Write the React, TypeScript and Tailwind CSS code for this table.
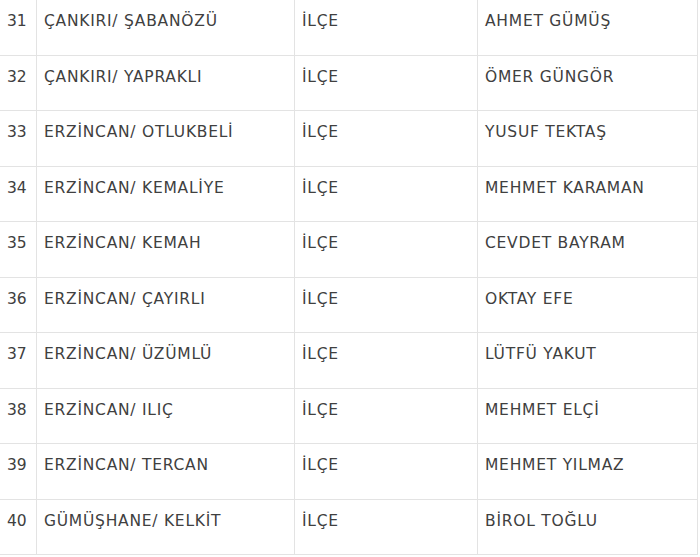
const ROWS = [
  { no: 31, place: 'ÇANKIRI/ ŞABANÖZÜ', type: 'İLÇE', name: 'AHMET GÜMÜŞ' },
  { no: 32, place: 'ÇANKIRI/ YAPRAKLI', type: 'İLÇE', name: 'ÖMER GÜNGÖR' },
  { no: 33, place: 'ERZİNCAN/ OTLUKBELİ', type: 'İLÇE', name: 'YUSUF TEKTAŞ' },
  { no: 34, place: 'ERZİNCAN/ KEMALİYE', type: 'İLÇE', name: 'MEHMET KARAMAN' },
  { no: 35, place: 'ERZİNCAN/ KEMAH', type: 'İLÇE', name: 'CEVDET BAYRAM' },
  { no: 36, place: 'ERZİNCAN/ ÇAYIRLI', type: 'İLÇE', name: 'OKTAY EFE' },
  { no: 37, place: 'ERZİNCAN/ ÜZÜMLÜ', type: 'İLÇE', name: 'LÜTFÜ YAKUT' },
  { no: 38, place: 'ERZİNCAN/ ILIÇ', type: 'İLÇE', name: 'MEHMET ELÇİ' },
  { no: 39, place: 'ERZİNCAN/ TERCAN', type: 'İLÇE', name: 'MEHMET YILMAZ' },
  { no: 40, place: 'GÜMÜŞHANE/ KELKİT', type: 'İLÇE', name: 'BİROL TOĞLU' },
];

const cell = 'border border-[#e3e3e3] pl-[7px] pr-2 pt-[9px] align-top';

export default function App() {
  return (
    <div className="h-[557px] w-[700px] overflow-hidden bg-white">
      <table
        className="-ml-px -mt-px table-fixed border-collapse text-[15.5px] leading-6 tracking-[0.75px] text-[#404040]"
        style={{ fontFamily: "'DejaVu Sans', sans-serif" }}
      >
        <colgroup>
          <col className="w-[37px]" />
          <col className="w-[258px]" />
          <col className="w-[183px]" />
          <col className="w-[220px]" />
        </colgroup>
        <tbody>
          {ROWS.map((r) => (
            <tr key={r.no} className="h-[55.5px]">
              <td className={`${cell} pr-0 tracking-normal`}>{r.no}</td>
              <td className={cell}>{r.place}</td>
              <td className={cell}>{r.type}</td>
              <td className={cell}>{r.name}</td>
            </tr>
          ))}
        </tbody>
      </table>
    </div>
  );
}
